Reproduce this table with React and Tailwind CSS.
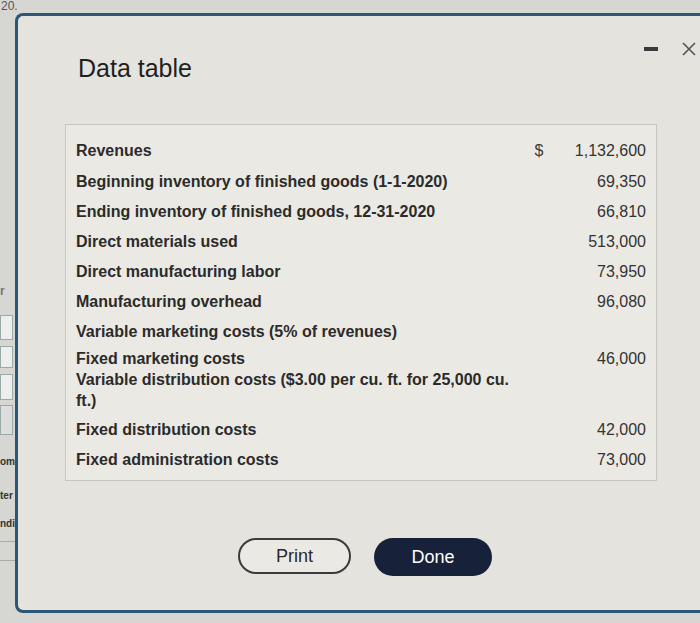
import React from 'react';

const rows = [
    { label: 'Revenues', dollar: true, value: '1,132,600', h: 'h-[30px]' },
    { label: 'Beginning inventory of finished goods (1-1-2020)', value: '69,350', h: 'h-[31px]' },
    { label: 'Ending inventory of finished goods, 12-31-2020', value: '66,810', h: 'h-[30px]' },
    { label: 'Direct materials used', value: '513,000', h: 'h-[30px]' },
    { label: 'Direct manufacturing labor', value: '73,950', h: 'h-[30px]' },
    { label: 'Manufacturing overhead', value: '96,080', h: 'h-[30px]' },
    { label: 'Variable marketing costs (5% of revenues)', value: '', h: 'h-[30px]' },
    { label: 'Fixed marketing costs', value: '46,000', h: 'h-[22px]' },
];

const tail = [
    { label: 'Fixed distribution costs', value: '42,000' },
    { label: 'Fixed administration costs', value: '73,000' },
];

const Row = ({ label, value, dollar, h }) => (
    <div className={`grid grid-cols-[1fr_30px_92px] items-center ${h}`}>
        <span className="font-bold text-[#2b2b2b]">{label}</span>
        <span className="text-center text-[#3a3a3a]">{dollar ? '$' : ''}</span>
        <span className="text-right text-[#333]">{value}</span>
    </div>
);

export default function App() {
    return (
        <div className="w-[700px] h-[623px] overflow-hidden bg-[#d6d6d2] flex flex-col" style={{ fontFamily: '"Liberation Sans", Arial, sans-serif' }}>
            <div className="h-[13px] text-[12px] leading-[12px] text-[#555] pl-[1px]">20.</div>
            <div className="flex flex-1">
                {/* left edge of the spreadsheet behind the dialog */}
                <div className="w-[15px] shrink-0 flex flex-col text-[10px] font-bold text-[#444] leading-none">
                    <div className="h-[272px]" />
                    <div className="text-[#777] text-[12px]">r</div>
                    <div className="h-[18px]" />
                    <div className="h-[25px] mr-[2px] border border-[#9aa] bg-[#eee]" />
                    <div className="h-[22px] mr-[2px] border border-[#9aa] bg-[#eee] mt-[6px]" />
                    <div className="h-[26px] mr-[2px] border border-[#9aa] bg-[#eee] mt-[6px]" />
                    <div className="h-[30px] mr-[2px] border border-[#9aa] bg-[#ddd] mt-[5px]" />
                    <div className="mt-[22px] text-[#333]">om</div>
                    <div className="mt-[24px] text-[#333]">ter</div>
                    <div className="mt-[18px] text-[#333]">ndi</div>
                    <div className="mt-[12px] border-t border-[#aaa]" />
                    <div className="mt-[18px] border-t border-[#aaa]" />
                </div>

                <div className="flex-1 mb-[10px] bg-[#e5e3dd] border-[3px] border-r-0 border-[#2c5675] rounded-tl-lg rounded-bl-lg flex flex-col">
                    <div className="flex justify-between pt-[19px] pl-[60px] pr-[2px]">
                        <h1 className="mt-[18px] text-[25px] leading-[30px] text-[#1f1f1f]">Data table</h1>
                        <div className="flex items-center gap-[23px] h-[28px]">
                            <div className="w-[14px] h-[4px] bg-[#3a3a3a]" />
                            <svg width="16" height="16" viewBox="0 0 16 16" className="mr-[1px]">
                                <path d="M2 2 L14 14 M14 2 L2 14" stroke="#555" strokeWidth="1.6" />
                            </svg>
                        </div>
                    </div>

                    <div className="ml-[47px] mt-[41px] w-[592px] bg-[#ebe9e3] border border-[#c8c6c0] pl-[10px] pr-[10px] pt-[11px] pb-[5px] text-[16px]">
                        {rows.map((r) => (
                            <Row key={r.label} {...r} />
                        ))}
                        <div className="grid grid-cols-[1fr_30px_92px] leading-[21px] pb-[4px]">
                            <span className="font-bold text-[#2b2b2b] pr-[10px]">Variable distribution costs ($3.00 per cu. ft. for 25,000 cu. ft.)</span>
                            <span />
                            <span />
                        </div>
                        {tail.map((r) => (
                            <Row key={r.label} {...r} h="h-[30px]" />
                        ))}
                    </div>

                    <div className="flex justify-center gap-[23px] mt-[57px] pl-[12px]">
                        <button className="w-[113px] h-[36px] rounded-full border-2 border-[#3b3b3b] bg-[#ebe9e3] text-[18px] text-[#2a2a2a]">Print</button>
                        <button className="w-[118px] h-[38px] rounded-full bg-[#17223a] text-[18px] text-white">Done</button>
                    </div>
                </div>
            </div>
        </div>
    );
}
